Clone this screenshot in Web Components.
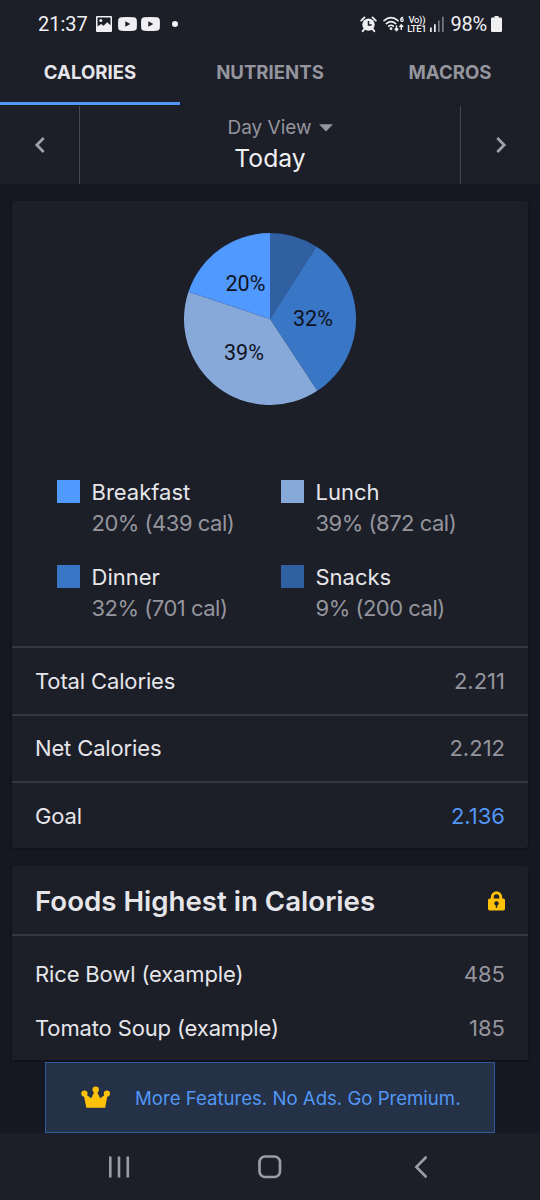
<!DOCTYPE html>
<html lang="en">
<head>
<meta charset="utf-8">
<meta name="viewport" content="width=device-width, initial-scale=1">
<title>Nutrition</title>
<style>
  :root {
    --bg: #151722;
    --surface: #1c1e28;
    --line: #353640;
    --text: #e6e6ea;
    --muted: #94959d;
    --accent: #5297f5;
    --gold: #ffc20a;
  }

  body {
    margin: 0;
    background: var(--bg);
    color: var(--text);
    font-family: Inter, "Liberation Sans", sans-serif;
  }
</style>
</head>
<body>
<nutrition-app></nutrition-app>

<script>
  const ICONS = {
    image: [16, 16, `<path fill="currentColor" fill-rule="evenodd" d="M1 0h14a1 1 0 0 1 1 1v14a1 1 0 0 1-1 1H1a1 1 0 0 1-1-1V1a1 1 0 0 1 1-1zM1.500 1.500v9L5 8l2.500 1.800 3.700-3.500 3.300 3V1.500z"/><circle cx="4.800" cy="4.600" r="1.500" fill="currentColor"/>`],
    video: [19, 14, `<path fill="currentColor" fill-rule="evenodd" d="M3.500.2Q9.500-.2 15.500.2 18.500.4 18.800 3q.3 4 0 8-.3 2.600-3.300 2.800-6 .4-12 0Q.5 13.600.2 11q-.3-4 0-8Q.5.4 3.500.2zM7.300 4.200v5.600L12.300 7z"/>`],
    alarm: [17, 16, `<circle cx="8.500" cy="8.600" r="6.200" fill="currentColor"/><path d="M1.200 4.600 4.500 1.400M15.800 4.600l-3.300-3.200M4.300 13.200l-1.600 2M12.700 13.200l1.600 2" stroke="currentColor" stroke-width="1.900" stroke-linecap="round"/><path d="M8.500 5v4.100h3.200" fill="none" stroke="#1c1e28" stroke-width="1.500"/>`],
    wifi: [22, 16, `<g fill="none" stroke="currentColor" stroke-width="1.600" stroke-linecap="round"><path d="M1 4.700Q8-1.600 15 4.700M3.300 7.600Q8 3.600 12.700 7.600M5.700 10.200Q8 8.400 10.300 10.200"/></g><circle cx="8" cy="12.700" r="1.400" fill="currentColor"/><path d="M20.200 1.300q-2.800.2-2.500 2.900a1.300 1.300 0 1 0 .4-1" fill="none" stroke="currentColor" stroke-width="1.200"/><path d="M13.500 9.500v5M11.700 12.500l1.800 2.200 1.800-2.200M18.300 14V9M16.500 11l1.800-2.200 1.800 2.200" fill="none" stroke="currentColor" stroke-width="1.400"/>`],
    signal: [14, 16, `<path fill="currentColor" d="M0 11.500h1.700V16H0zM4 8.200h1.700V16H4z"/><path fill="#777983" d="M8 4.500h1.700V16H8zM12 .8h1.700V16H12z"/>`],
    battery: [11, 16, `<path fill="currentColor" d="M3.500 0h4v1.500h2.300q1.200 0 1.200 1.200v12q0 1.300-1.200 1.300H1.200Q0 16 0 14.700v-12q0-1.200 1.200-1.200h2.300z"/>`],
    left: [12, 18, `<path d="M9.700 2 2.800 9l6.900 7" fill="none" stroke="currentColor" stroke-width="2.700"/>`],
    right: [12, 18, `<path d="m2.300 2 6.900 7-6.900 7" fill="none" stroke="currentColor" stroke-width="2.700"/>`],
    down: [14, 8, `<path fill="currentColor" d="M0 .3h14L7 7.500z"/>`],
    lock: [17, 20, `<path d="M4.300 8.500V5.900a4.200 4.200 0 0 1 8.400 0v2.600" fill="none" stroke="currentColor" stroke-width="2.900"/><path fill="currentColor" fill-rule="evenodd" d="M1.700 7.600h13.600q1.700 0 1.700 1.700v8.400q0 1.700-1.700 1.700H1.700Q0 19.400 0 17.700V9.300q0-1.700 1.700-1.700zM7.800 14.500v2.300h1.400v-2.300a2.200 2.200 0 1 0-1.400 0z"/>`],
    crown: [29, 24, `<g fill="currentColor"><circle cx="14.700" cy="3.600" r="3.200"/><circle cx="3.400" cy="7.600" r="3.100"/><circle cx="25.900" cy="7.600" r="3.100"/><path d="M2.700 8.500H5l5.200 3.700L13.700 5h2l3.400 7.200 5.200-3.700h2.300L24.200 21.800H5.300z"/></g>`],
    recents: [22, 22, `<path d="M2.300 .5v21M11 .5v21M19.800 .5v21" stroke="currentColor" stroke-width="2.600"/>`],
    home: [24, 24, `<rect x="1.500" y="1.500" width="20.500" height="20.500" rx="5.700" fill="none" stroke="currentColor" stroke-width="2.700"/>`],
    back: [14, 22, `<path d="M11.700 1.500 2.300 11l9.400 9.500" fill="none" stroke="currentColor" stroke-width="2.600" stroke-linecap="round"/>`],
  };

  const MEALS = [
    { name: 'Breakfast', cal: 439, pct: 20, color: '#5099ff' },
    { name: 'Lunch', cal: 872, pct: 39, color: '#87a9d9' },
    { name: 'Dinner', cal: 701, pct: 32, color: '#3976c6' },
    { name: 'Snacks', cal: 200, pct: 9, color: '#3160a2' },
  ];

  class UiIcon extends HTMLElement {
    constructor() {
      super();
      this.attachShadow({ mode: 'open' });
    }

    connectedCallback() {
      const [w, h, body] = ICONS[this.getAttribute('name')];
      this.shadowRoot.innerHTML = `
        <style>
          :host { display: block; flex: none; }
          svg { display: block; overflow: visible; }
        </style>
        <svg width="${w}" height="${h}" viewBox="0 0 ${w} ${h}">${body}</svg>
      `;
    }
  }

  class StatusBar extends HTMLElement {
    constructor() {
      super();
      this.attachShadow({ mode: 'open' }).innerHTML = `
        <style>
          :host {
            display: flex;
            justify-content: space-between;
            align-items: center;
            height: 47px;
            padding: 0 38px;
            box-sizing: border-box;
            background: var(--surface);
            font: 20px Roboto, sans-serif;
            color: #f0f0f2;
          }
          div { display: flex; align-items: center; }
          .left ui-icon { margin-left: 4px; }
          .left ui-icon:first-of-type { margin-left: 8px; margin-right: 2.500px; }
          .dot { width: 6px; height: 6px; border-radius: 50%; background: currentColor; margin-left: 12px; }
          .volte {
            display: block;
            margin: 0 3.500px 0 2px;
            font-size: 9.500px;
            font-weight: 500;
            line-height: 9px;
            letter-spacing: -0.300px;
            text-align: center;
          }
          .pct { margin: 0 4px 0 6.500px; letter-spacing: -0.2px; }
        </style>
        <div class="left">
          <span>21:37</span>
          <ui-icon name="image"></ui-icon>
          <ui-icon name="video"></ui-icon>
          <ui-icon name="video"></ui-icon>
          <span class="dot"></span>
        </div>
        <div class="right">
          <ui-icon name="alarm" style="margin-right:6px"></ui-icon>
          <ui-icon name="wifi"></ui-icon>
          <span class="volte">Vo))<br>LTE1</span>
          <ui-icon name="signal"></ui-icon>
          <span class="pct">98%</span>
          <ui-icon name="battery"></ui-icon>
        </div>
      `;
    }
  }

  class TabBar extends HTMLElement {
    constructor() {
      super();
      this.attachShadow({ mode: 'open' }).innerHTML = `
        <style>
          :host {
            display: flex;
            height: 58px;
            background: var(--surface);
          }
          ::slotted(*) {
            flex: 1;
            box-sizing: border-box;
            border-bottom: 3px solid transparent;
            padding-top: 13px;
            line-height: 24px;
            text-align: center;
            font-size: 18.600px;
            font-weight: 700;
            color: var(--muted);
          }
          ::slotted([active]) {
            color: var(--text);
            border-color: var(--accent);
          }
        </style>
        <slot></slot>
      `;
    }
  }

  class DateBar extends HTMLElement {
    constructor() {
      super();
      this.attachShadow({ mode: 'open' }).innerHTML = `
        <style>
          :host {
            display: flex;
            height: 79px;
            box-sizing: border-box;
            border-top: 1px solid #1a1b25;
            background: var(--surface);
            color: var(--muted);
          }
          .arrow {
            width: 79px;
            display: flex;
            align-items: center;
            justify-content: center;
            color: #a0a1a9;
          }
          .middle {
            flex: 1;
            border: solid #454650;
            border-width: 0 1px;
            text-align: center;
          }
          .view {
            display: flex;
            justify-content: center;
            align-items: center;
            gap: 7px;
            margin-top: 9px;
            padding-left: 20px;
            font-size: 19px;
            line-height: 26px;
          }
          .day { font-size: 24.700px; line-height: 34px; color: #f0f0f2; }
        </style>
        <div class="arrow"><ui-icon name="left"></ui-icon></div>
        <div class="middle">
          <div class="view"><span>Day View</span><ui-icon name="down"></ui-icon></div>
          <div class="day"><slot></slot></div>
        </div>
        <div class="arrow"><ui-icon name="right"></ui-icon></div>
      `;
    }
  }

  class UiCard extends HTMLElement {
    constructor() {
      super();
      this.attachShadow({ mode: 'open' }).innerHTML = `
        <style>
          :host {
            display: block;
            box-sizing: border-box;
            margin: 0 12.500px 0 12px;
            border-radius: 3px;
            background: var(--surface);
            box-shadow: 0 1px 3px rgba(0, 0, 0, .35);
          }
        </style>
        <slot></slot>
      `;
    }
  }

  class MealPie extends HTMLElement {
    constructor() {
      super();
      this.attachShadow({ mode: 'open' });
      this.render();
    }

    render() {
      const total = MEALS.reduce((sum, m) => sum + m.cal, 0);
      const point = (a, r) => `${(86 + r * Math.sin(a)).toFixed(2)} ${(86 - r * Math.cos(a)).toFixed(2)}`;
      let angle = 0;
      let slices = '';

      // the chart is drawn clockwise, in the reverse of the legend's order
      for (const m of [MEALS[3], MEALS[2], MEALS[1], MEALS[0]]) {
        const end = angle + m.cal / total * Math.PI * 2;
        slices += `<path fill="${m.color}" d="M86 86L${point(angle, 86)}A86 86 0 0 1 ${point(end, 86)}z"/>`;
        angle = end;
      }

      this.shadowRoot.innerHTML = `
        <style>
          :host { display: block; padding: 32px 0 72px; }
          svg { display: block; margin: 0 auto; }
          text { font: 21.500px Roboto, sans-serif; fill: #10131f; text-anchor: middle; }
        </style>
        <svg width="172" height="172" viewBox="0 0 172 172">
          ${slices}
          <text x="61.500" y="58">20%</text>
          <text x="129" y="93">32%</text>
          <text x="60" y="127">39%</text>
        </svg>
      `;
    }
  }

  class MealLegend extends HTMLElement {
    constructor() {
      super();
      this.attachShadow({ mode: 'open' }).innerHTML = `
        <style>
          :host {
            display: grid;
            grid-template-columns: 224px 1fr;
            row-gap: 23px;
            padding: 0 0 22px 45px;
            font-size: 22px;
            line-height: 31px;
          }
          .meal { display: flex; gap: 11.500px; }
          .swatch { width: 23px; height: 23px; margin-top: 3px; }
          .value { color: var(--muted); letter-spacing: -0.500px; }
        </style>
        ${MEALS.map(m => `
          <div class="meal">
            <div class="swatch" style="background:${m.color}"></div>
            <div>
              <div class="name">${m.name}</div>
              <div class="value">${m.pct}% (${m.cal} cal)</div>
            </div>
          </div>`).join('')}
      `;
    }
  }

  class ValueRow extends HTMLElement {
    constructor() {
      super();
      this.attachShadow({ mode: 'open' }).innerHTML = `
        <style>
          :host {
            display: flex;
            justify-content: space-between;
            align-items: center;
            box-sizing: border-box;
            height: 67.500px;
            padding: 0 22.500px 0 23px;
            border-top: 2px solid var(--line);
            font-size: 22px;
            letter-spacing: -0.140px;
          }
          :host([plain]) { height: 54px; border: 0; }
          ::slotted([slot=value]) { color: var(--muted); letter-spacing: 0; }
          :host([goal]) ::slotted([slot=value]) { color: var(--accent); }
        </style>
        <slot></slot>
        <slot name="value"></slot>
      `;
    }
  }

  class CardTitle extends HTMLElement {
    constructor() {
      super();
      this.attachShadow({ mode: 'open' }).innerHTML = `
        <style>
          :host {
            display: flex;
            justify-content: space-between;
            align-items: center;
            box-sizing: border-box;
            height: 70px;
            padding: 1px 22.500px 0 23px;
            border-bottom: 2px solid var(--line);
            font-size: 27.650px;
            font-weight: 600;
          }
          ui-icon { color: var(--gold); }
        </style>
        <slot></slot>
        <ui-icon name="lock"></ui-icon>
      `;
    }
  }

  class PremiumBanner extends HTMLElement {
    constructor() {
      super();
      this.attachShadow({ mode: 'open' }).innerHTML = `
        <style>
          :host {
            display: flex;
            align-items: center;
            box-sizing: border-box;
            height: 71px;
            margin: 0 45px;
            padding-left: 35px;
            border: 1px solid #2d5a9c;
            background: #243147;
            color: var(--accent);
            font-size: 18.600px;
          }
          ui-icon { color: var(--gold); margin-right: 25px; }
        </style>
        <ui-icon name="crown"></ui-icon>
        <slot></slot>
      `;
    }
  }

  class NavBar extends HTMLElement {
    constructor() {
      super();
      this.attachShadow({ mode: 'open' }).innerHTML = `
        <style>
          :host {
            display: flex;
            justify-content: space-between;
            align-items: center;
            box-sizing: border-box;
            height: 67px;
            padding: 0 112px 0 108px;
            background: var(--surface);
            color: #9b9ca4;
          }
          [name=home] { margin-right: 4px; }
        </style>
        <ui-icon name="recents"></ui-icon>
        <ui-icon name="home"></ui-icon>
        <ui-icon name="back"></ui-icon>
      `;
    }
  }

  class NutritionApp extends HTMLElement {
    constructor() {
      super();
      this.attachShadow({ mode: 'open' }).innerHTML = `
        <style>
          :host {
            display: flex;
            flex-direction: column;
            height: 1200px;
            overflow: hidden;
          }
          main {
            flex: 1;
            min-height: 0;
            display: flex;
            flex-direction: column;
            gap: 18px;
            padding-top: 17px;
            overflow: hidden;
          }
          .summary { height: 647px; }
          .foods { height: 194px; border-radius: 3px 3px 0 0; }
          .rows { padding-top: 11px; }
        </style>
        <status-bar></status-bar>
        <tab-bar>
          <div active>CALORIES</div>
          <div>NUTRIENTS</div>
          <div>MACROS</div>
        </tab-bar>
        <date-bar>Today</date-bar>
        <main>
          <ui-card class="summary">
            <meal-pie></meal-pie>
            <meal-legend></meal-legend>
            <value-row>Total Calories<span slot="value">2.211</span></value-row>
            <value-row>Net Calories<span slot="value">2.212</span></value-row>
            <value-row goal>Goal<span slot="value">2.136</span></value-row>
          </ui-card>
          <ui-card class="foods">
            <card-title>Foods Highest in Calories</card-title>
            <div class="rows">
              <value-row plain>Rice Bowl (example)<span slot="value">485</span></value-row>
              <value-row plain>Tomato Soup (example)<span slot="value">185</span></value-row>
            </div>
          </ui-card>
        </main>
        <premium-banner>More Features. No Ads. Go Premium.</premium-banner>
        <nav-bar></nav-bar>
      `;
    }
  }

  customElements.define('ui-icon', UiIcon);
  customElements.define('status-bar', StatusBar);
  customElements.define('tab-bar', TabBar);
  customElements.define('date-bar', DateBar);
  customElements.define('ui-card', UiCard);
  customElements.define('meal-pie', MealPie);
  customElements.define('meal-legend', MealLegend);
  customElements.define('value-row', ValueRow);
  customElements.define('card-title', CardTitle);
  customElements.define('premium-banner', PremiumBanner);
  customElements.define('nav-bar', NavBar);
  customElements.define('nutrition-app', NutritionApp);
</script>
</body>
</html>
